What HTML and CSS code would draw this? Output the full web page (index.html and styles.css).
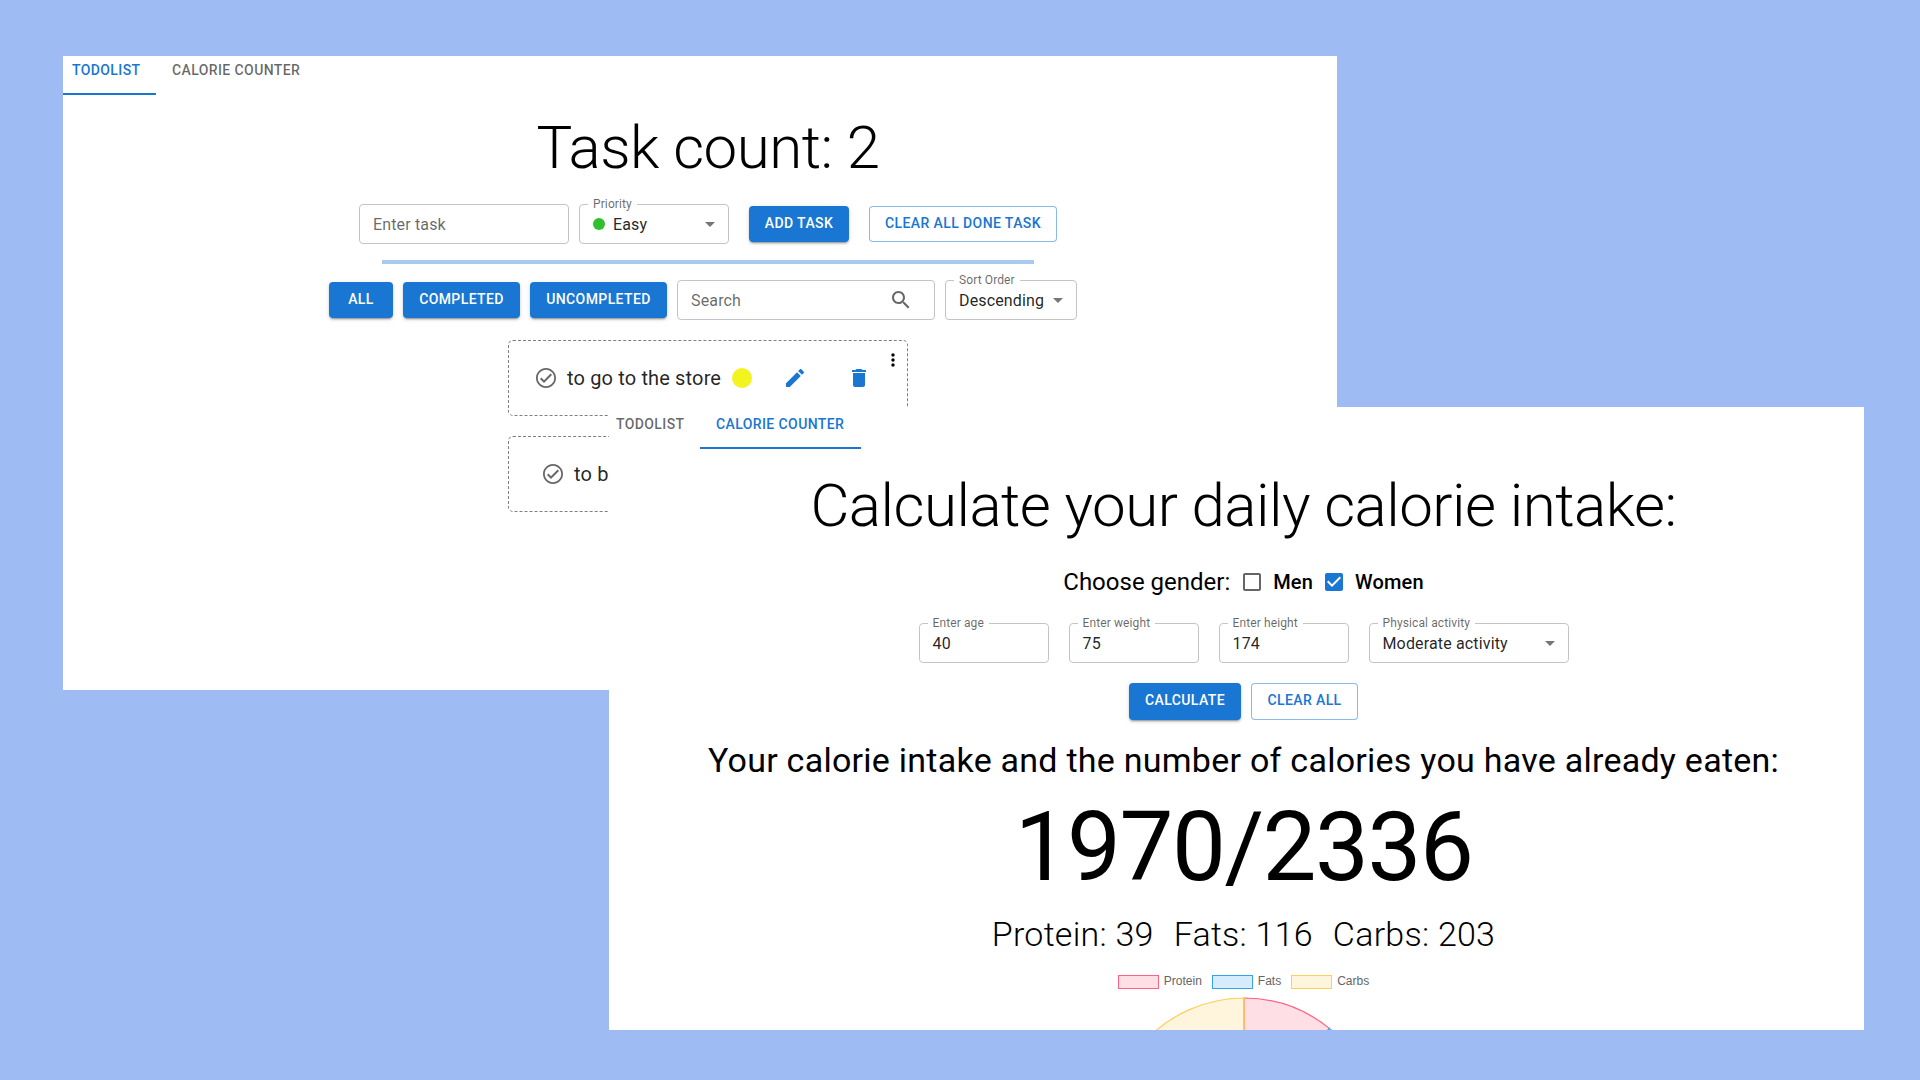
FILE: index.html
```html
<!DOCTYPE html>
<html lang="en">
<head>
<meta charset="utf-8">
<title>Todolist and calorie counter</title>
<link rel="stylesheet" href="styles.css">
</head>
<body>
<main class="desktop">
  <section class="window window-todo">
    <div class="page">
      <nav class="tabs"><a class="tab active">TODOLIST</a><a class="tab">CALORIE COUNTER</a></nav>
      <h1 class="title">Task count: 2</h1>
      <div class="row form-row">
        <div class="field w210"><span class="placeholder">Enter task</span></div>
        <div class="field w150 select"><span class="label">Priority</span><i class="dot"></i><span>Easy</span><svg class="arrow" viewBox="0 0 24 24"><path d="M7 10l5 5 5-5z"/></svg></div>
        <button class="btn filled w100 add">ADD TASK</button>
        <button class="btn outlined w188">CLEAR ALL DONE TASK</button>
      </div>
      <div class="progress"></div>
      <div class="row filter-row">
        <button class="btn filled w64">ALL</button>
        <button class="btn filled w117">COMPLETED</button>
        <button class="btn filled w137">UNCOMPLETED</button>
        <div class="field w258 search"><span class="placeholder">Search</span><svg class="icon grey" viewBox="0 0 24 24"><path d="M15.5 14h-.79l-.28-.27C15.41 12.59 16 11.11 16 9.5 16 5.91 13.09 3 9.5 3S3 5.91 3 9.5 5.91 16 9.5 16c1.61 0 3.09-.59 4.23-1.57l.27.28v.79l5 4.99L20.49 19l-4.99-5zm-6 0C7.01 14 5 11.99 5 9.5S7.01 5 9.5 5 14 7.01 14 9.5 11.99 14 9.5 14z"/></svg></div>
        <div class="field w132 select"><span class="label">Sort Order</span><span>Descending</span><svg class="arrow" viewBox="0 0 24 24"><path d="M7 10l5 5 5-5z"/></svg></div>
      </div>
      <div class="tasks">
        <article class="task">
          <svg class="icon check" viewBox="0 0 24 24"><path d="M12 2C6.48 2 2 6.48 2 12s4.48 10 10 10 10-4.480 10-10S17.520 2 12 2zm0 18.200c-4.520 0-8.200-3.680-8.200-8.200S7.480 3.800 12 3.800s8.200 3.680 8.200 8.200-3.680 8.200-8.200 8.200zm4.590-12.620L10 14.170l-2.590-2.580L6 13l4 4 8-8z"/></svg>
          <span class="task-text">to go to the store</span>
          <i class="level"></i>
          <svg class="icon blue pencil" viewBox="0 0 24 24"><path d="M3 17.250V21h3.750L17.810 9.940l-3.750-3.750L3 17.250zM20.710 7.040c.39-.39.39-1.020 0-1.410l-2.340-2.340c-.39-.39-1.020-.39-1.410 0l-1.830 1.830 3.750 3.750 1.830-1.830z"/></svg>
          <svg class="icon blue trash" viewBox="0 0 24 24"><path d="M6 19c0 1.100.9 2 2 2h8c1.100 0 2-.9 2-2V7H6v12zM19 4h-3.500l-1-1h-5l-1 1H5v2h14V4z"/></svg>
          <svg class="more" viewBox="0 0 24 24"><path d="M12 8c1.100 0 2-.9 2-2s-.9-2-2-2-2 .9-2 2 .9 2 2 2zm0 2c-1.100 0-2 .9-2 2s.9 2 2 2 2-.9 2-2-.9-2-2-2zm0 6c-1.100 0-2 .9-2 2s.9 2 2 2 2-.9 2-2-.9-2-2-2z"/></svg>
        </article>
        <article class="task second">
          <svg class="icon check" viewBox="0 0 24 24"><path d="M12 2C6.480 2 2 6.480 2 12s4.480 10 10 10 10-4.480 10-10S17.520 2 12 2zm0 18.200c-4.520 0-8.200-3.680-8.200-8.200S7.480 3.800 12 3.800s8.200 3.680 8.200 8.200-3.680 8.200-8.200 8.200zm4.590-12.620L10 14.170l-2.590-2.580L6 13l4 4 8-8z"/></svg>
          <span class="task-text">to b</span>
        </article>
      </div>
    </div>
  </section>

  <section class="window window-calorie">
    <div class="page">
      <nav class="tabs"><a class="tab">TODOLIST</a><a class="tab active">CALORIE COUNTER</a></nav>
      <h1 class="title">Calculate your daily calorie intake:</h1>
      <div class="row gender">
        <span class="question">Choose gender:</span>
        <svg class="icon box" viewBox="0 0 24 24"><path d="M19 5v14H5V5h14m0-2H5c-1.100 0-2 .9-2 2v14c0 1.100.9 2 2 2h14c1.100 0 2-.9 2-2V5c0-1.100-.9-2-2-2z"/></svg>
        <span class="option">Men</span>
        <svg class="icon box blue" viewBox="0 0 24 24"><path d="M19 3H5c-1.110 0-2 .9-2 2v14c0 1.100.890 2 2 2h14c1.110 0 2-.9 2-2V5c0-1.100-.890-2-2-2zm-9 14l-5-5 1.410-1.410L10 14.170l7.590-7.590L19 8l-9 9z"/></svg>
        <span class="option">Women</span>
      </div>
      <div class="row inputs">
        <div class="field w130"><span class="label">Enter age</span><span>40</span></div>
        <div class="field w130"><span class="label">Enter weight</span><span>75</span></div>
        <div class="field w130"><span class="label">Enter height</span><span>174</span></div>
        <div class="field w200 select"><span class="label">Physical activity</span><span>Moderate activity</span><svg class="arrow" viewBox="0 0 24 24"><path d="M7 10l5 5 5-5z"/></svg></div>
      </div>
      <div class="row actions">
        <button class="btn filled w112">CALCULATE</button>
        <button class="btn outlined w107">CLEAR ALL</button>
      </div>
      <p class="summary">Your calorie intake and the number of calories you have already eaten:</p>
      <p class="total">1970/2336</p>
      <div class="row macros"><span>Protein: 39</span><span>Fats: 116</span><span>Carbs: 203</span></div>
      <div class="row legend">
        <span class="key"><i class="swatch pink"></i>Protein</span>
        <span class="key"><i class="swatch sky"></i>Fats</span>
        <span class="key"><i class="swatch sand"></i>Carbs</span>
      </div>
      <svg class="pie" viewBox="-140 -140 280 280">
        <path class="slice-pink" d="M0 0V-135A135 135 0 0 1 85.300 -104.600Z"/>
        <path class="slice-sky" d="M0 0L85.300 -104.600A135 135 0 0 1 55.200 123.200Z"/>
        <path class="slice-sand" d="M0 0L55.200 123.200A135 135 0 1 1 0 -135Z"/>
        <path class="seam" d="M0 0V-135"/>
      </svg>
    </div>
  </section>
</main>
</body>
</html>
```
FILE: styles.css
```css
* { box-sizing: border-box; }
body { margin: 0; background: #9fbbf3; font-family: Roboto, sans-serif; color: #000; }
.desktop { position: relative; width: 1920px; height: 1080px; overflow: hidden; }
.window { position: absolute; overflow: hidden; background: #fff; }
.window-todo { left: 63px; top: 56px; width: 1274px; height: 634px; }
.window-calorie { left: 609px; top: 407px; width: 1255px; height: 623px; }
.window-todo .page { width: 1304px; margin: -9px 0 0 -7px; }
.window-calorie .page { width: 1287px; margin: -6px 0 0 -9px; }

.tabs { display: flex; height: 48px; }
.tab { display: flex; align-items: center; width: 161px; padding: 0 0 2px 16px; font-size: 14px; font-weight: 500; letter-spacing: .02857em; white-space: nowrap; color: rgba(0,0,0,.6); border: solid transparent; border-width: 2px 0; }
.tab:first-child { width: 100px; }
.tab.active { color: #1976d2; border-bottom-color: #1976d2; }
.title { margin: 17px 0 0; text-align: center; font-size: 60px; font-weight: 300; line-height: 72px; letter-spacing: -.00833em; }
.row { display: flex; justify-content: center; align-items: center; }

.field { position: relative; display: flex; align-items: center; height: 40px; padding: 0 13px; border: 1px solid #c4c4c4; border-radius: 4px; font-size: 16px; letter-spacing: .00938em; color: rgba(0,0,0,.87); white-space: nowrap; }
.label { position: absolute; left: 8px; top: -9px; padding: 0 5px; background: #fff; font-size: 12px; line-height: 16px; letter-spacing: .00938em; color: rgba(0,0,0,.6); }
.placeholder { color: rgba(0,0,0,.6); }
.arrow { width: 24px; height: 24px; margin-left: auto; margin-right: -7px; fill: rgba(0,0,0,.54); }
.dot { width: 12px; height: 12px; margin-right: 8px; border-radius: 50%; background: #2fc02f; }
.search { justify-content: space-between; }
.search .icon { margin-right: 8px; }

.btn { height: 36px; padding: 0 0 2px; border: 0; border-radius: 4px; font: 500 14px/24px Roboto, sans-serif; letter-spacing: .02857em; white-space: nowrap; }
.filled { background: #1976d2; color: #fff; box-shadow: 0 3px 1px -2px rgba(0,0,0,.2), 0 2px 2px rgba(0,0,0,.14), 0 1px 5px rgba(0,0,0,.12); }
.outlined { background: #fff; color: #1976d2; border: 1px solid rgba(25,118,210,.5); }
.w64 { width: 64px; } .w100 { width: 100px; } .w107 { width: 107px; } .w112 { width: 112px; }
.w117 { width: 117px; } .w130 { width: 130px; } .w132 { width: 132px; } .w137 { width: 137px; }
.w150 { width: 150px; } .w188 { width: 188px; } .w200 { width: 200px; } .w210 { width: 210px; } .w258 { width: 258px; }

.form-row { gap: 10px; margin-top: 20px; }
.form-row .add { margin: 0 10px; }
.progress { width: 652px; height: 4px; margin: 16px auto; background: #a7caed; }
.filter-row { gap: 10px; margin-left: -10px; }

.tasks { display: flex; flex-direction: column; align-items: center; gap: 20px; margin-top: 20px; }
.task { position: relative; display: flex; align-items: center; width: 400px; height: 76px; padding-left: 25px; border: 1px dashed #808080; border-radius: 5px; }
.task.second { padding-left: 32px; }
.icon { flex: none; width: 24px; height: 24px; }
.check, .grey, .box { fill: rgba(0,0,0,.6); }
.blue { fill: #1976d2; }
.task-text { margin-left: 9px; font-size: 20px; line-height: 32px; letter-spacing: .0075em; color: rgba(0,0,0,.87); white-space: nowrap; }
.level { width: 20px; height: 20px; margin-left: 11px; border-radius: 50%; background: #f3f31f; }
.pencil { margin-left: 31px; }
.trash { margin-left: 40px; }
.more { position: absolute; right: 4px; top: 9px; width: 20px; height: 20px; }

.window-calorie .title { margin-top: 21px; }
.gender { height: 32px; margin-top: 24px; }
.question { margin-right: 10px; font-size: 24px; line-height: 32px; }
.option { margin: 0 9px; font-size: 20px; font-weight: 500; line-height: 32px; letter-spacing: .0075em; }
.option:last-child { margin-right: 0; }
.inputs { gap: 20px; margin-top: 25px; }
.actions { gap: 10px; margin-top: 20px; }
.actions .btn { height: 37px; padding-bottom: 3px; }
.summary { margin: 19px 0 0; text-align: center; font-size: 34px; line-height: 42px; letter-spacing: .00735em; }
.total { margin: 10px 0 0; text-align: center; font-size: 96px; line-height: 112px; letter-spacing: -.01562em; }
.macros { gap: 20px; margin-top: 10px; font-size: 34px; font-weight: 300; line-height: 42px; letter-spacing: .00735em; }
.legend { gap: 10px; margin-top: 20px; font: 12px/12px "Liberation Sans", sans-serif; color: #666; }
.key { display: flex; align-items: flex-start; gap: 5px; }
.swatch { width: 41px; height: 14px; border: 1px solid; }
.pink { background: #ffdfe6; border-color: #ff6384; }
.sky { background: #d7ecfb; border-color: #36a2eb; }
.sand { background: #fff4dc; border-color: #ffce56; }
.pie { display: block; width: 280px; height: 280px; margin: 4px auto 0; }
.pie path { stroke-width: 1.2; }
.slice-pink { fill: #ffdfe6; stroke: #ff6384; }
.slice-sky { fill: #d7ecfb; stroke: #36a2eb; }
.slice-sand { fill: #fff4dc; stroke: #ffce56; }
.pie .seam { stroke: #ffb873; stroke-width: 1.6; }
```
